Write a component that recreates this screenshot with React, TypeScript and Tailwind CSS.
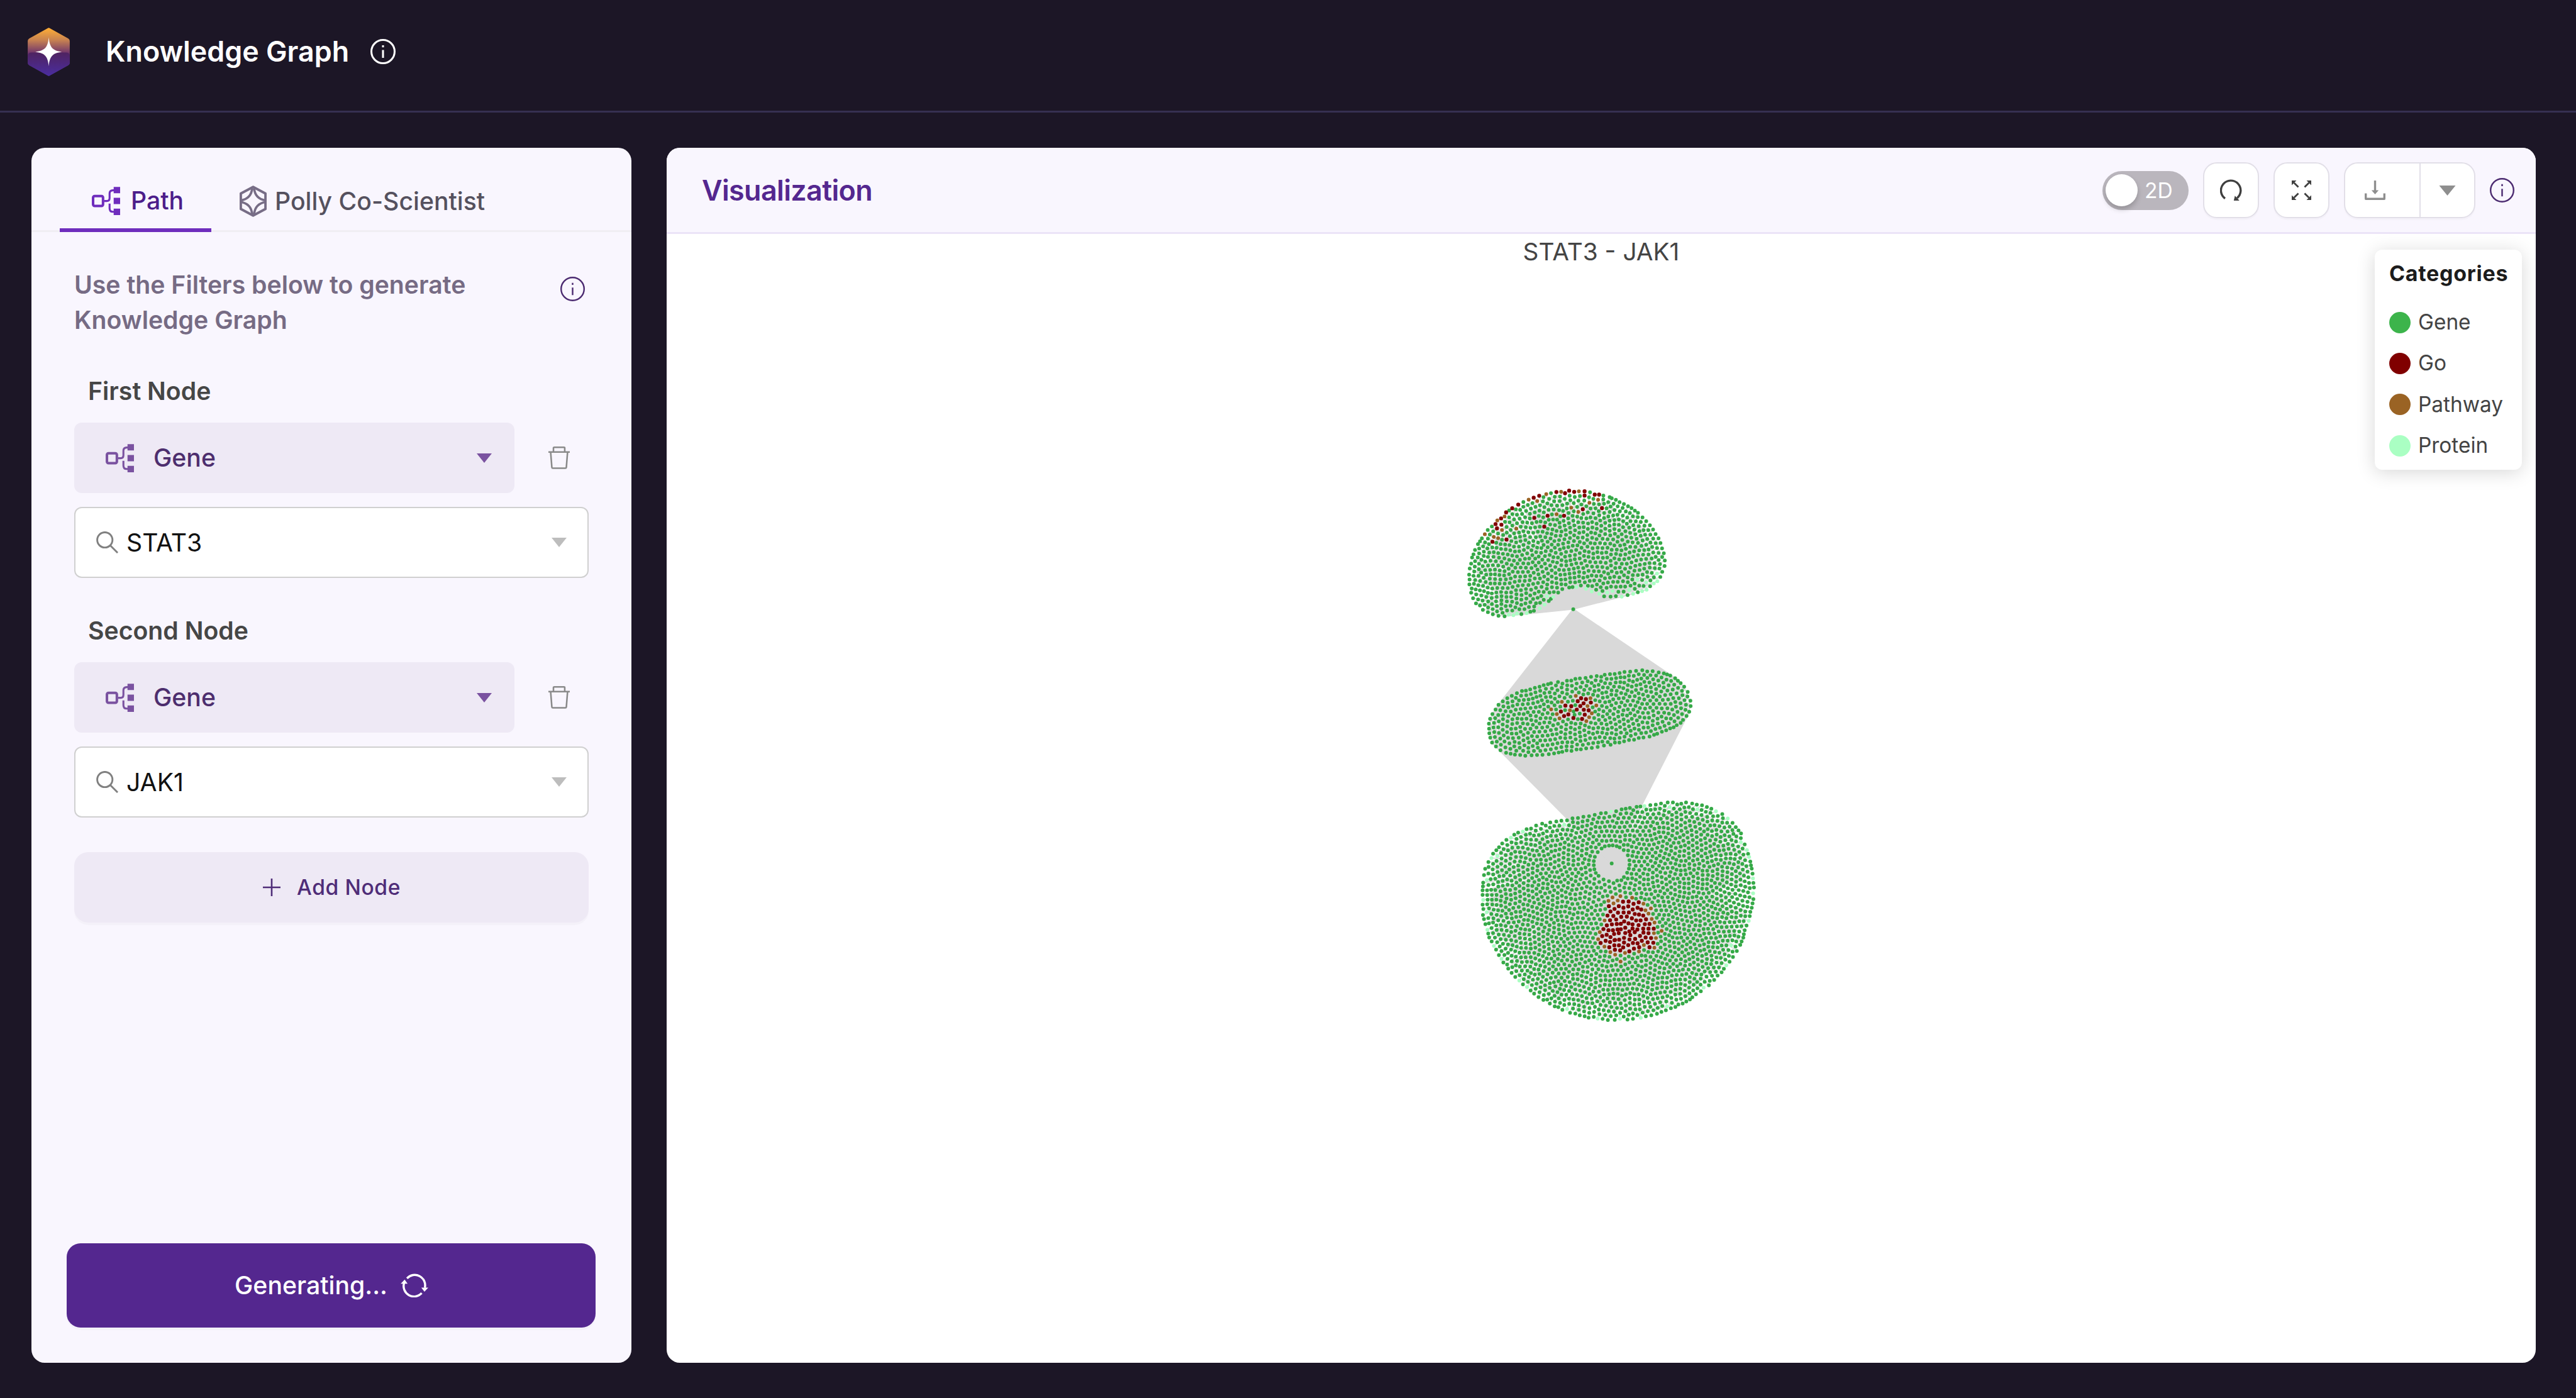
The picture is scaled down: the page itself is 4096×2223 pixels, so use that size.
import React from "react";

type Pt = [number, number];

/* ---------- graph data ---------- */

const parse = (s: string): Pt[] =>
  s
    .trim()
    .split(/\s+/)
    .map((p) => p.split(",").map(Number) as Pt);

interface ClusterSpec {
  origin: Pt;
  scale: Pt;
  outline: string;
  pale: string;
  go: string;
  pathway: string;
  hubs: Pt[];
  hole?: { at: Pt; r: number };
}

const HUB_TOP: Pt = [2680.7, 1038];
const HUB_BOTTOM: Pt = [2746.2, 1471.3];

const CLUSTERS: ClusterSpec[] = [
  {
    origin: [2460, 800],
    scale: [3, 3],
    hubs: [HUB_TOP],
    outline: `130,537 133,506 140,481 145,450 160,411 175,381 195,352 210,331 225,309 246,291 265,279 274,260 293,250 311,240 319,219 350,198 381,179 407,166 434,154 460,144 488,134 524,126 548,121 576,115 600,114 620,121 641,108 667,114 691,111 720,111 748,116 772,128 794,128 816,133 848,141 880,155 921,176 960,197 993,221 1016,245 1035,264 1054,285 1070,307 1083,330 1098,352 1108,376 1116,403 1125,428 1130,465 1129,493 1117,523 1107,549 1092,571 1074,582 1055,597 1037,614 1014,622 992,627 968,635 940,642 910,650 880,647 853,650 820,648 795,635 779,614 757,623 727,610 701,593 679,601 641,603 606,611 585,629 560,651 537,672 515,691 491,709 461,722 424,734 397,739 375,736 356,745 332,742 311,750 280,748 251,740 226,729 200,717 185,695 165,684 150,658 140,630 143,608 131,587 132,562`,
    pale: `679,601 727,610 757,623 795,635 836,629 863,621 910,650 968,635 948,616 1014,622 1037,614 1092,571 1074,582 1035,578 990,563 1090,532 527,647 560,651 515,691 491,709 424,734 375,736 356,745 332,742`,
    go: `249,369 321,358 272,301 265,279 295,282 293,250 319,219 350,198 381,179 460,144 488,134 463,247 531,236 615,236 514,292 576,115 620,121 641,108 667,114 720,111 720,133 772,128 794,128 711,203 809,197`,
    pathway: `210,331 256,344 278,351 298,309 371,302 274,260 311,240 434,154 478,161 524,126 577,229 600,114 691,111 652,195 688,217 745,170 789,155`,
  },
  {
    origin: [2490, 1030],
    scale: [3, 3],
    hubs: [HUB_TOP, HUB_BOTTOM],
    outline: `141,609 147,584 159,560 175,537 190,513 212,495 235,479 258,467 284,453 310,442 330,440 352,434 376,426 400,420 421,412 458,403 494,396 517,404 540,390 562,389 583,380 606,378 635,375 663,370 692,366 715,370 733,359 760,356 784,355 809,350 834,345 863,343 893,339 925,336 950,342 978,341 1009,347 1035,352 1068,363 1093,377 1121,402 1139,420 1157,447 1156,470 1171,492 1172,519 1165,548 1151,570 1133,590 1121,605 1085,628 1067,633 1047,643 1025,650 1001,661 962,675 931,680 907,682 883,691 857,693 832,699 808,706 785,706 763,717 729,721 697,728 667,733 638,735 611,740 589,741 563,748 538,746 516,753 474,761 447,765 415,768 387,769 359,771 327,773 301,769 274,767 252,763 229,758 200,745 177,726 157,706 148,681 143,658 142,635`,
    pale: "",
    go: `612,479 637,484 595,494 625,505 662,501 532,517 562,520 608,519 590,537 626,538 651,541 509,547 547,562 525,570 573,580 617,585 631,563`,
    pathway: `585,467 660,479 514,497 690,516 645,519 459,536 555,541 488,560 502,582 667,556 653,576 639,596`,
  },
  {
    origin: [2490, 1340],
    scale: [2.904, 3],
    hubs: [HUB_BOTTOM],
    hole: { at: HUB_BOTTOM, r: 30.5 },
    outline: `105,531 108,492 112,453 118,421 134,386 149,366 157,344 173,326 202,292 223,273 245,262 262,247 281,236 304,230 323,218 345,215 370,200 400,190 440,184 470,179 495,175 523,173 550,163 577,161 604,155 632,152 660,145 691,137 715,136 740,128 766,127 793,117 834,110 867,104 906,100 935,95 962,93 988,87 1021,82 1047,82 1068,92 1088,88 1112,82 1142,87 1165,93 1191,96 1215,105 1237,114 1260,127 1291,141 1318,164 1342,186 1358,208 1384,240 1383,264 1402,296 1413,325 1424,361 1430,384 1437,420 1441,446 1443,470 1445,493 1448,517 1444,546 1445,576 1441,598 1437,620 1430,641 1427,663 1422,687 1411,711 1402,735 1398,755 1395,773 1387,792 1380,810 1363,841 1344,872 1327,896 1311,914 1299,932 1288,950 1268,967 1251,989 1225,1016 1204,1028 1185,1047 1161,1062 1131,1089 1095,1110 1059,1127 1037,1134 1012,1144 990,1152 968,1162 940,1170 913,1175 888,1183 849,1188 822,1192 785,1188 759,1193 725,1194 699,1188 675,1187 655,1178 630,1182 610,1175 586,1170 564,1161 538,1157 523,1138 500,1142 480,1128 462,1124 438,1110 406,1091 382,1077 360,1059 343,1043 325,1025 305,1012 287,992 267,974 249,953 232,931 208,900 199,881 186,862 172,834 161,815 150,792 138,772 133,752 129,733 119,704 112,678 107,657 109,627 105,604 108,580 105,554`,
    pale: `906,100 740,128 304,230 245,262 149,366 178,356 509,196 1031,106 1168,117 1260,127 1318,164 1383,285 1413,325 1424,361 1443,470 1444,546 1422,687 1335,812 1311,914 1199,1028 1018,1124 888,1183 785,1188 675,1187 523,1138 325,1025 287,992 199,881 161,815 129,733 126,643 108,580 126,478`,
    go: `800,589 828,588 878,592 852,600 730,612 779,612 826,613 758,626 802,620 872,620 848,629 890,629 738,639 775,645 803,644 829,644 723,660 752,662 791,667 819,665 858,652 879,655 900,660 844,674 736,684 766,680 806,690 865,685 887,685 914,679 720,710 745,705 769,703 789,702 827,700 847,705 877,709 908,704 931,703 703,729 728,735 750,735 773,731 789,730 811,722 847,726 871,731 900,727 926,727 952,727 831,741 858,745 901,747 926,750 697,765 719,758 756,754 779,750 811,749 738,770 760,785 836,760 884,764 805,774 912,772 939,775 689,800 714,789 736,795 758,786 781,783 832,782 860,779 805,798 849,800 872,802 893,789 922,797 950,799 757,812 780,812 826,811 732,822 801,823 854,829 880,822 931,822 760,835 786,838 831,843`,
    pathway: `748,567 787,561 845,569 728,585 774,583 753,598 901,599 938,623 911,633 926,650 942,677 956,696 709,685 685,745 991,738 953,750 963,775 677,781 708,819 903,811 955,824 737,847 761,860 810,851 879,844 788,895`,
  },
];

const SPACING = 8.6;

function inside(x: number, y: number, poly: Pt[]) {
  let hit = false;
  for (let i = 0, j = poly.length - 1; i < poly.length; j = i++) {
    const [xi, yi] = poly[i];
    const [xj, yj] = poly[j];
    if (yi > y !== yj > y && x < ((xj - xi) * (y - yi)) / (yj - yi) + xi) hit = !hit;
  }
  return hit;
}

function randomizer(seed: number) {
  let s = seed;
  return () => {
    s = (s * 1664525 + 1013904223) % 4294967296;
    return s / 4294967296;
  };
}

/* Packs a cluster: pinned nodes keep their place, the rest relax around them. */
function layoutCluster(c: ClusterSpec, seed: number) {
  const conv = (s: string): Pt[] =>
    s.trim() ? parse(s).map(([x, y]) => [c.origin[0] + x / c.scale[0], c.origin[1] + y / c.scale[1]] as Pt) : [];
  const poly = conv(c.outline);
  const pale = conv(c.pale);
  const go = conv(c.go);
  const pathway = conv(c.pathway);
  const near = (p: Pt, list: Pt[], d: number) =>
    list.some((q) => (p[0] - q[0]) ** 2 + (p[1] - q[1]) ** 2 < d * d);
  const colored = [...pale, ...go, ...pathway];
  const rim = poly.filter((p) => !near(p, colored, 3));
  const fixed: Pt[] = [...colored, ...rim];
  const rnd = randomizer(seed);

  const xs = poly.map((p) => p[0]);
  const ys = poly.map((p) => p[1]);
  const x0 = Math.min(...xs);
  const x1 = Math.max(...xs);
  const y0 = Math.min(...ys);
  const y1 = Math.max(...ys);
  const free: Pt[] = [];
  let row = 0;
  for (let y = y0; y < y1; y += SPACING * 0.866, row++) {
    for (let x = x0 + (row % 2) * SPACING * 0.5; x < x1; x += SPACING) {
      const p: Pt = [x + (rnd() - 0.5) * 17, y + (rnd() - 0.5) * 17];
      if (!inside(p[0], p[1], poly)) continue;
      if (near(p, fixed, SPACING * 0.62)) continue;
      if (c.hole && (near(p, [c.hole.at], c.hole.r) || near(p, go, SPACING * 0.85))) continue;
      free.push(p);
    }
  }

  const R = SPACING * 1.3;
  for (let it = 0; it < 60; it++) {
    const grid = new Map<string, Pt[]>();
    for (const p of [...fixed, ...free]) {
      const k = Math.floor(p[0] / R) + ":" + Math.floor(p[1] / R);
      const cell = grid.get(k);
      if (cell) cell.push(p);
      else grid.set(k, [p]);
    }
    const moves = free.map((p) => {
      const gx = Math.floor(p[0] / R);
      const gy = Math.floor(p[1] / R);
      let dx = 0;
      let dy = 0;
      for (let i = -1; i <= 1; i++)
        for (let j = -1; j <= 1; j++)
          for (const q of grid.get(gx + i + ":" + (gy + j)) || []) {
            if (q === p) continue;
            const ex = p[0] - q[0];
            const ey = p[1] - q[1];
            const d = Math.sqrt(ex * ex + ey * ey) + 0.01;
            if (d < R) {
              const f = (0.24 * (R - d)) / d;
              dx += ex * f;
              dy += ey * f;
            }
          }
      return [dx, dy] as Pt;
    });
    free.forEach((p, i) => {
      const nx = p[0] + moves[i][0];
      const ny = p[1] + moves[i][1];
      if (!inside(nx, ny, poly)) return;
      if (c.hole && near([nx, ny], [c.hole.at], c.hole.r)) return;
      p[0] = nx;
      p[1] = ny;
    });
  }
  return { gene: [...rim, ...free], pale, go, pathway, all: [...fixed, ...free], hubs: c.hubs };
}

const layouts = CLUSTERS.map((c, i) => layoutCluster(c, 17 + i * 31));
const dots = (list: Pt[]) => list.map(([x, y]) => `M${x.toFixed(1)} ${y.toFixed(1)}h0`).join("");
const edges = (list: typeof layouts) =>
  list
    .map((l) =>
      l.hubs
        .map((h) => l.all.map(([x, y]) => `M${h[0]} ${h[1]}L${x.toFixed(1)} ${y.toFixed(1)}`).join(""))
        .join("")
    )
    .join("");
const outerEdges = edges([layouts[0], layouts[2]]);
const bridgeEdges = edges([layouts[1]]);
const genePath = dots([...layouts.flatMap((l) => l.gene), HUB_TOP, HUB_BOTTOM]);
const proteinPath = dots(layouts.flatMap((l) => l.pale));
const goPath = dots(layouts.flatMap((l) => l.go));
const pathwayPath = dots(layouts.flatMap((l) => l.pathway));

function NetworkGraph() {
  return (
    <svg viewBox="1136 398.6 3184.6 1923.4" className="absolute inset-0 h-full w-full" fill="none" strokeLinecap="round">
      <path d={outerEdges} stroke="#d9d9d9" strokeWidth={1.7} />
      <path d={bridgeEdges} stroke="#d9d9d9" strokeWidth={2.6} />
      <path d={genePath} stroke="#35a947" strokeWidth={6.4} />
      <path d={proteinPath} stroke="#aaffc3" strokeWidth={6.4} />
      <path d={pathwayPath} stroke="#9a6324" strokeWidth={6.4} />
      <path d={goPath} stroke="#800000" strokeWidth={6.8} />
    </svg>
  );
}

/* ---------- icons ---------- */

function LogoIcon() {
  return (
    <svg viewBox="0 0 72 83" className="h-[77px] w-[67px]">
      <defs>
        <linearGradient id="logoTop" x1="0" y1="0" x2="0" y2="1">
          <stop offset="0" stopColor="#ffae35" />
          <stop offset="0.25" stopColor="#c98350" />
          <stop offset="0.52" stopColor="#71366c" />
          <stop offset="1" stopColor="#4a2d9a" />
        </linearGradient>
        <linearGradient id="logoBottom" x1="0" y1="0" x2="0" y2="1">
          <stop offset="0" stopColor="#4f2360" />
          <stop offset="1" stopColor="#4a2da0" />
        </linearGradient>
      </defs>
      <path d="M34 1Q36 -.4 38 1L69.500 18.500Q72 20 72 23V60Q72 63 69.500 64.500L38 82Q36 83.400 34 82L2.500 64.500Q0 63 0 60V23Q0 20 2.500 18.500Z" fill="url(#logoTop)" />
      <path d="M0 47Q1 42.500 6 42.500H66Q71 42.500 72 47V60Q72 63 69.500 64.500L38 82Q36 83.400 34 82L2.500 64.500Q0 63 0 60Z" fill="url(#logoBottom)" />
      <path d="M36 16.500C37.500 33 42 39.500 58.500 41.500C42 43.500 37.500 50 36 66C34.500 50 30 43.500 13 41.500C30 39.500 34.500 33 36 16.500Z" fill="#fff" />
    </svg>
  );
}

function InfoIcon({ className, weight = 2.6 }: { className: string; weight?: number }) {
  return (
    <svg viewBox="0 0 42 42" className={className} fill="none" stroke="currentColor" strokeWidth={weight}>
      <circle cx="21" cy="21" r={21 - weight / 2} />
      <path d="M21 10.500V14M21 18.500V31.500" />
    </svg>
  );
}

function BranchIcon({ className }: { className: string }) {
  return (
    <svg viewBox="0 0 145 145" className={className} fill="none" stroke="currentColor">
      <rect x="6.500" y="47.500" width="51" height="51" rx="8" strokeWidth="13" />
      <path d="M63 73H76Q91 73 91 58V35Q91 18 108 18H114M91 86V110Q91 128 108 128H114" strokeWidth="10" />
      <path d="M112 1h33v32h-33zM112 56h33v33h-33zM112 112h33v33h-33z" fill="currentColor" stroke="none" />
    </svg>
  );
}

function PollyIcon() {
  return (
    <svg viewBox="0 0 140 162" className="h-[50px] w-[43px] text-[#776d86]" fill="none" stroke="currentColor" strokeLinejoin="round">
      <path d="M70 7L134 41V121L70 155L6 121V41Z" strokeWidth="13" />
      <path d="M65 14Q60 68 6 77M75 14Q80 68 134 77M65 148Q60 94 6 85M75 148Q80 94 134 85" strokeWidth="12" />
    </svg>
  );
}

function Caret({ className }: { className: string }) {
  return (
    <svg viewBox="0 0 26 16" className={className} fill="currentColor">
      <path d="M0 0H26L13 16Z" />
    </svg>
  );
}

function TrashIcon() {
  return (
    <svg viewBox="0 0 36 38" className="h-[36px] w-[34px] text-[#8a8a8a]" fill="none" stroke="currentColor" strokeWidth="2.700">
      <path d="M0 9.300H36M8.500 9V2.500Q8.500 1.300 10 1.300H26Q27.500 1.300 27.500 2.500V9M3.800 10L5.800 35Q6 36.500 7.500 36.500H28.500Q30 36.500 30.200 35L32.200 10" />
    </svg>
  );
}

function SearchIcon() {
  return (
    <svg viewBox="0 0 37 37" className="size-[35px] text-[#808080]" fill="none" stroke="currentColor" strokeWidth="3.100">
      <circle cx="14.500" cy="14.300" r="12.800" />
      <path d="M23.500 23.500L36 36" />
    </svg>
  );
}

function SyncIcon() {
  return (
    <svg viewBox="40 43 140 122" className="h-[38px] w-[44px]" fill="none" stroke="currentColor" strokeWidth="11">
      <path d="M72 68A53 53 0 0 1 163 116M147 143A53 53 0 0 1 57 92" />
      <path d="M145 115H181L161 136ZM40 95H75L60 74Z" fill="currentColor" stroke="none" />
    </svg>
  );
}

function ReloadIcon() {
  return (
    <svg viewBox="125 135 117 113" className="h-[35px] w-[36px] text-[#3f3f3f]" fill="none" stroke="currentColor" strokeWidth="11">
      <path d="M151 234A51 51 0 1 1 213 232" />
      <path d="M202 220L196 245H225Z" fill="currentColor" stroke="none" />
    </svg>
  );
}

function ExpandIcon() {
  return (
    <svg viewBox="0 0 100 100" className="size-[31px] text-[#3f3f3f]" stroke="currentColor" fill="currentColor" strokeWidth="9">
      <path d="M34 34L12 12M66 34L88 12M34 66L12 88M66 66L88 88" />
      <path stroke="none" d="M0 0H24L0 24ZM100 0H76L100 24ZM0 100H24L0 76ZM100 100H76L100 76Z" />
    </svg>
  );
}

function DownloadIcon() {
  return (
    <svg viewBox="0 0 107 100" className="h-[31px] w-[33px] text-[#8e8e8e]" fill="none" stroke="currentColor" strokeWidth="11">
      <path d="M53.500 0V54" />
      <path d="M5.500 66V94.500H101.500V66" strokeLinejoin="round" />
      <path d="M35 50H72L53.500 71Z" fill="currentColor" stroke="none" />
    </svg>
  );
}

/* ---------- panels ---------- */

function NodeFilter({ label, value }: { label: string; value: string }) {
  return (
    <section className="flex h-[381px] flex-col">
      <h3 className="ml-[22px] flex h-[56px] items-center pt-[2px] text-[39.2px] font-semibold leading-none text-[#464646]">{label}</h3>
      <div className="mt-[23px] flex items-center">
        <button className="flex h-[112px] w-[700px] items-center rounded-[12px] bg-[#eee9f5] pl-[50px] pr-[36px] text-[#7a52a0]">
          <BranchIcon className="size-[45px]" />
          <span className="ml-[31px] text-[39.2px] font-medium leading-none text-[#4d2e6e]">Gene</span>
          <Caret className="ml-auto h-[15px] w-[24px]" />
        </button>
        <button className="ml-[54px]">
          <TrashIcon />
        </button>
      </div>
      <div className="mt-[22px] flex h-[113px] w-[818px] shrink-0 items-center rounded-[12px] border-[2.500px] border-[#d0d0d0] bg-white pl-[33px] pr-[33px]">
        <SearchIcon />
        <span className="ml-[13px] text-[39.2px] leading-none text-[#111]">{value}</span>
        <Caret className="ml-auto h-[15px] w-[24px] text-[#bdbdbd]" />
      </div>
    </section>
  );
}

function FilterPanel() {
  return (
    <aside className="flex w-[954px] flex-col overflow-hidden rounded-[21px] bg-[#f9f6fe]">
      <nav className="flex h-[134px] shrink-0 border-b-[3px] border-[#f0eef3] pl-[45px]">
        <div className="flex h-[134px] w-[241px] items-center border-b-[6px] border-[#6f2dbd] pl-[51px] pt-10 text-[#6f2dbd]">
          <BranchIcon className="size-[45px]" />
          <span className="ml-[17px] text-[39.2px] font-medium leading-none text-[#4c1d8a]">Path</span>
        </div>
        <div className="flex h-[128px] items-center pl-[45px] pt-[41px]">
          <PollyIcon />
          <span className="ml-[13px] text-[39.2px] font-medium leading-none text-[#55515e]">Polly Co-Scientist</span>
        </div>
      </nav>
      <div className="flex grow flex-col pl-[68px]">
        <div className="flex pt-[56px]">
          <p className="w-[773px] whitespace-pre-line text-[39.2px] font-semibold leading-[56px] text-[#766b84]">
            {"Use the Filters below to generate\nKnowledge Graph"}
          </p>
          <InfoIcon className="mt-[15px] size-[39px] text-[#4b2a70]" />
        </div>
        <div className="mt-[56px]">
          <NodeFilter label="First Node" value="STAT3" />
          <NodeFilter label="Second Node" value="JAK1" />
        </div>
        <button className="flex h-[112px] w-[818px] items-center justify-center rounded-[22px] bg-[#eee9f5] pl-px text-[#4f2d78] shadow-[0_4px_0_rgba(0,0,0,0.02)]">
          <svg viewBox="0 0 28 28" className="size-[28px]" stroke="currentColor" strokeWidth="2.600">
            <path d="M14 0V28M0 14H28" />
          </svg>
          <span className="ml-[26px] text-[33.6px] font-medium leading-none tracking-[0.6px]">Add Node</span>
        </button>
      </div>
      <button className="mb-[56px] ml-[56px] flex h-[134px] w-[841px] shrink-0 items-center justify-center rounded-[22px] bg-[#54278f] pl-px text-white shadow-[0_4px_0_rgba(0,0,0,0.02)]">
        <span className="mr-[21px] text-[39.2px] font-medium leading-none">Generating...</span>
        <SyncIcon />
      </button>
    </aside>
  );
}

const CATEGORIES = [
  { name: "Gene", dot: "bg-[#3cb44b]" },
  { name: "Go", dot: "bg-[#800000]" },
  { name: "Pathway", dot: "bg-[#9a6324]" },
  { name: "Protein", dot: "bg-[#aaffc3]" },
];

function Legend() {
  return (
    <div className="absolute right-[22px] top-[25px] h-[350px] w-[234px] rounded-[12px] bg-white pl-[23px] pt-[20px] shadow-[0_4px_30px_rgba(0,0,0,0.16)]">
      <h4 className="flex h-[36px] items-center text-[34px] font-bold leading-none tracking-[0.7px] text-[#1c1c1c]">Categories</h4>
      <ul className="mt-[27px]">
        {CATEGORIES.map((c) => (
          <li key={c.name} className="flex h-[65.300px] items-center">
            <span className={`size-[34px] rounded-full ${c.dot}`} />
            <span className="ml-[12px] text-[33.4px] leading-none text-[#444]">{c.name}</span>
          </li>
        ))}
      </ul>
    </div>
  );
}

function VisualizationPanel() {
  return (
    <main className="flex w-[2972px] flex-col overflow-hidden rounded-[21px] bg-white">
      <header className="flex h-[137px] shrink-0 items-center border-b-[3px] border-[#ebe4f7] bg-[#f9f6fe] pl-[56px] pr-[34px] pt-px">
        <h2 className="pt-[2px] text-[44.8px] font-semibold leading-none tracking-[-0.6px] text-[#54278f]">Visualization</h2>
        <div className="ml-auto flex h-[62px] w-[137px] items-center rounded-full bg-[#bab6bd] pl-[5px]">
          <span className="size-[51px] rounded-full bg-white shadow-[0_5px_9px_rgba(0,0,0,0.2)]" />
          <span className="ml-[11px] text-[33.6px] leading-none text-white">2D</span>
        </div>
        <button className="ml-[23px] flex size-[89px] items-center justify-center rounded-[22px] border-[2.500px] border-[#e2dfe8] bg-white shadow-[0_3px_0_rgba(0,0,0,0.02)]">
          <ReloadIcon />
        </button>
        <button className="ml-[23px] flex size-[89px] items-center justify-center rounded-[22px] border-[2.500px] border-[#e2dfe8] bg-white shadow-[0_3px_0_rgba(0,0,0,0.02)]">
          <ExpandIcon />
        </button>
        <div className="ml-[23px] flex h-[89px] w-[209px] rounded-[22px] border-[2.500px] border-[#e2dfe8] bg-white shadow-[0_3px_0_rgba(0,0,0,0.02)]">
          <button className="flex w-[118px] items-center pl-[31px]">
            <DownloadIcon />
          </button>
          <button className="flex grow items-center justify-center border-l-[2.500px] border-[#e2dfe8] text-[#8e8e8e]">
            <Caret className="h-[16px] w-[27px]" />
          </button>
        </div>
        <InfoIcon className="ml-[23px] size-[39px] text-[#4b2a70]" />
      </header>
      <div className="relative grow">
        <NetworkGraph />
        <h3 className="relative flex h-[57px] items-center justify-center text-[38.8px] leading-none text-[#444]">STAT3 - JAK1</h3>
        <Legend />
      </div>
    </main>
  );
}

export default function App() {
  return (
    <div className="flex h-[2223px] w-[4096px] flex-col overflow-hidden bg-[#1c1626] font-['Inter',sans-serif]">
      <header className="flex h-[179px] shrink-0 items-center border-b-[3px] border-[#363051] pb-[12px] pl-[44px] text-white">
        <LogoIcon />
        <h1 className="ml-[57px] text-[44.8px] font-semibold leading-none">Knowledge Graph</h1>
        <InfoIcon className="ml-[34px] size-[40px]" weight={3.2} />
      </header>
      <div className="flex grow gap-[56px] pb-[56px] pl-[50px] pt-[56px]">
        <FilterPanel />
        <VisualizationPanel />
      </div>
    </div>
  );
}
